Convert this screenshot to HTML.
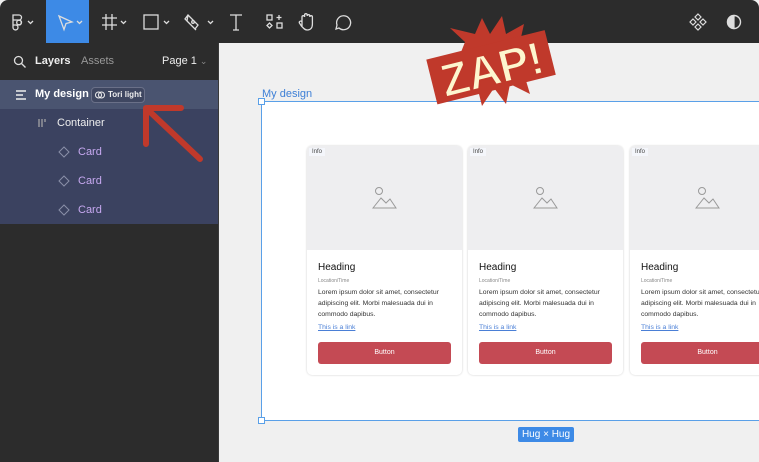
<!DOCTYPE html>
<html><head><style>
*{margin:0;padding:0;box-sizing:border-box}
body{width:759px;height:462px;overflow:hidden;background:#f0f0f0;font-family:"Liberation Sans",sans-serif;position:relative}
.tb{position:absolute;left:0;top:0;width:759px;height:43px;background:#2c2c2c;border-radius:8px 8px 0 0}
.sb{position:absolute;left:0;top:43px;width:219px;height:419px;background:#2c2c2c;border-right:1px solid #3a3a3a}
.a{position:absolute}
.card{position:absolute;top:146px;width:155px;height:229px;background:#fff;border-radius:5px;box-shadow:0 0 2px rgba(0,0,0,.2);overflow:hidden}
.card .img{height:104px;background:#eeeef0;position:relative}
.card .info{position:absolute;left:2px;top:2px;font-size:6px;color:#444;background:#f4f6fb;padding:1px 3px}
.card h3{font-size:10px;font-weight:normal;color:#111;margin:12px 0 0 11px}
.card .loc{font-size:5px;color:#888;margin:5px 0 0 11px}
.card p{font-size:6.8px;line-height:11px;color:#333;margin:3px 8px 0 11px}
.card .lk{font-size:6.8px;color:#4a7fd6;text-decoration:underline;margin:4px 0 0 11px}
.card .btn{position:absolute;left:11px;top:196px;width:133px;height:22px;background:#c44a54;border-radius:3px;color:#fff;font-size:7px;text-align:center;line-height:22px}
</style></head><body>
<div class="tb">
 <div class="a" style="left:46px;top:0;width:43px;height:43px;background:#3d8ae6"></div>
 <svg class="a" style="left:0;top:0" width="380" height="43" fill="none" stroke="#ddd" stroke-width="1.3">
  <path d="M13 15h6a2.5 2.5 0 0 1 0 5h-6zM13 20h6a2.5 2.5 0 0 1 0 5h-6zM13 25h3a2.5 2.5 0 1 1-3 2.5z"/><circle cx="19" cy="22.5" r="2.3"/>
  <path d="M28 21l2.5 2.5 2.5-2.5"/>
  <path d="M59 16l13 6-6 1.5-2 6z"/><path d="M77 21l2.5 2.5 2.5-2.5"/>
  <path d="M106 14v16M112 14v16M102 18h15M102 25h15"/><path d="M121 21l2.5 2.5 2.5-2.5"/>
  <rect x="144" y="15" width="14" height="14"/><path d="M164 21l2.5 2.5 2.5-2.5"/>
  <path d="M188 15l10 10-3 4-10-10zM188 15l-1 6 9 9"/><circle cx="193" cy="22" r="1.3"/><path d="M208 21l2.5 2.5 2.5-2.5"/>
  <path d="M230 15h12M236 15v15M233 30h6"/>
  <rect x="267" y="15" width="5" height="5"/><path d="M279 15v5M276.5 17.5h5"/><path d="M269.5 23l2.5 2.5-2.5 2.5-2.5-2.5z"/><rect x="277" y="23" width="5" height="5"/>
  <path d="M302 26v-9a1.3 1.3 0 0 1 2.6 0v-2a1.3 1.3 0 0 1 2.6 0v1a1.3 1.3 0 0 1 2.6 0v1a1.3 1.3 0 0 1 2.6 0v7c0 4-2 6-5 6s-4-2-6-4l-2-3a1.3 1.3 0 0 1 2.6-1z"/>
  <path d="M339 28a7 7 0 1 0-2-3l-1 4z"/>
 </svg>
 <svg class="a" style="left:680px;top:0" width="79" height="43" fill="none" stroke="#ddd" stroke-width="1.2">
  <path d="M18 14l3 3-3 3-3-3zM18 24l3 3-3 3-3-3zM13 19l3 3-3 3-3-3zM23 19l3 3-3 3-3-3z"/>
  <circle cx="54" cy="22" r="6.5" stroke-width="1.4"/><path d="M54 15.5a6.5 6.5 0 0 0 0 13z" fill="#ddd"/>
 </svg>
</div>
<div class="sb">
 <svg class="a" style="left:13px;top:12px" width="14" height="14" fill="none" stroke="#ddd" stroke-width="1.3"><circle cx="5.5" cy="5.5" r="4"/><path d="M8.5 8.5l4 4"/></svg>
 <div class="a" style="left:35px;top:12px;font-size:11px;font-weight:bold;color:#eee">Layers</div>
 <div class="a" style="left:81px;top:12px;font-size:11px;color:#999">Assets</div>
 <div class="a" style="left:162px;top:12px;font-size:11px;color:#eee">Page 1 <span style="color:#888;font-size:9px">⌄</span></div>
 <div class="a" style="left:0;top:37px;width:218px;height:29px;background:#4a5470"></div>
 <div class="a" style="left:0;top:66px;width:218px;height:115px;background:#3b4260"></div>
 <svg class="a" style="left:15px;top:46px" width="12" height="12" stroke="#eee" stroke-width="1.6"><path d="M1 2h10M1 6h7M1 10h10"/></svg>
 <div class="a" style="left:35px;top:45px;font-size:11px;font-weight:bold;color:#fff">My design</div>
 <div class="a" style="left:91px;top:44px;width:54px;height:16px;border:1px solid #6a7088;border-radius:4px;background:#3f4761;font-size:8px;color:#eee;line-height:14px;padding-left:16px;font-weight:bold">Tori light</div>
 <svg class="a" style="left:95px;top:48px" width="10" height="8" fill="none" stroke="#eee"><circle cx="3.5" cy="4" r="3"/><circle cx="6.5" cy="4" r="3"/></svg>
 <svg class="a" style="left:37px;top:75px" width="10" height="10" stroke="#aaa" stroke-width="1.2"><path d="M2 1v8M5 1v8M8 1v3"/></svg>
 <div class="a" style="left:57px;top:74px;font-size:11px;color:#eee">Container</div>
 <div class="a" style="left:78px;top:103px;font-size:11px;color:#c6a8f0">Card</div>
 <div class="a" style="left:78px;top:132px;font-size:11px;color:#c6a8f0">Card</div>
 <div class="a" style="left:78px;top:161px;font-size:11px;color:#c6a8f0">Card</div>
 <svg class="a" style="left:57px;top:102px" width="14" height="74" fill="none" stroke="#8a8fa8"><path d="M7 2l5 5-5 5-5-5zM7 31l5 5-5 5-5-5zM7 60l5 5-5 5-5-5z"/></svg>
</div>
<!-- arrow -->
<svg class="a" style="left:140px;top:100px" width="70" height="65"><path d="M6 44V8h35M8 10l52 49" fill="none" stroke="#c0392b" stroke-width="6" stroke-linecap="round" stroke-linejoin="round"/></svg>
<!-- canvas frame -->
<div class="a" style="left:262px;top:88px;font-size:11px;color:#3d7fd6">My design</div>
<div class="a" style="left:261px;top:101px;width:510px;height:320px;background:#fff;border:1px solid #5aa0e8"></div>
<div class="a" style="left:258px;top:98px;width:7px;height:7px;background:#fff;border:1px solid #5aa0e8"></div>
<div class="a" style="left:258px;top:417px;width:7px;height:7px;background:#fff;border:1px solid #5aa0e8"></div>
<div class="a" style="left:518px;top:427px;width:56px;height:15px;background:#3d8ae6;border-radius:2px;color:#fff;font-size:10px;text-align:center;line-height:15px">Hug × Hug</div>
<div class="card" style="left:307px"><div class="img"><span class="info">Info</span><svg class="a" style="left:65px;top:40px" width="25" height="24" fill="none" stroke="#999"><circle cx="7" cy="5" r="3.5"/><path d="M1 22l8-10 5 5 4-4 6 9z"/></svg></div><h3>Heading</h3><div class="loc">Location/Time</div><p>Lorem ipsum dolor sit amet, consectetur adipiscing elit. Morbi malesuada dui in commodo dapibus.</p><div class="lk">This is a link</div><div class="btn">Button</div></div>
<div class="card" style="left:468px"><div class="img"><span class="info">Info</span><svg class="a" style="left:65px;top:40px" width="25" height="24" fill="none" stroke="#999"><circle cx="7" cy="5" r="3.5"/><path d="M1 22l8-10 5 5 4-4 6 9z"/></svg></div><h3>Heading</h3><div class="loc">Location/Time</div><p>Lorem ipsum dolor sit amet, consectetur adipiscing elit. Morbi malesuada dui in commodo dapibus.</p><div class="lk">This is a link</div><div class="btn">Button</div></div>
<div class="card" style="left:630px"><div class="img"><span class="info">Info</span><svg class="a" style="left:65px;top:40px" width="25" height="24" fill="none" stroke="#999"><circle cx="7" cy="5" r="3.5"/><path d="M1 22l8-10 5 5 4-4 6 9z"/></svg></div><h3>Heading</h3><div class="loc">Location/Time</div><p>Lorem ipsum dolor sit amet, consectetur adipiscing elit. Morbi malesuada dui in commodo dapibus.</p><div class="lk">This is a link</div><div class="btn">Button</div></div>
<!-- ZAP -->
<svg class="a" style="left:420px;top:12px" width="150" height="95">
 <path d="M45 30L30 16 55 22 62 6 70 22 82 4 86 22 104 12 100 30 128 30 112 46 126 62 104 62 110 82 90 72 86 92 74 76 62 94 58 78 40 86 44 70 20 74 34 58z" fill="#c0392b"/>
 <g transform="rotate(-14 72 55)">
  <rect x="10" y="32" width="122" height="46" fill="#c0392b"/>
  <text x="71" y="73" text-anchor="middle" font-family="Liberation Sans" font-weight="bold" font-size="46" fill="#fdf6cf" stroke="#c0392b" stroke-width="1.5" letter-spacing="-1">ZAP!</text>
 </g>
</svg>
</body></html>
